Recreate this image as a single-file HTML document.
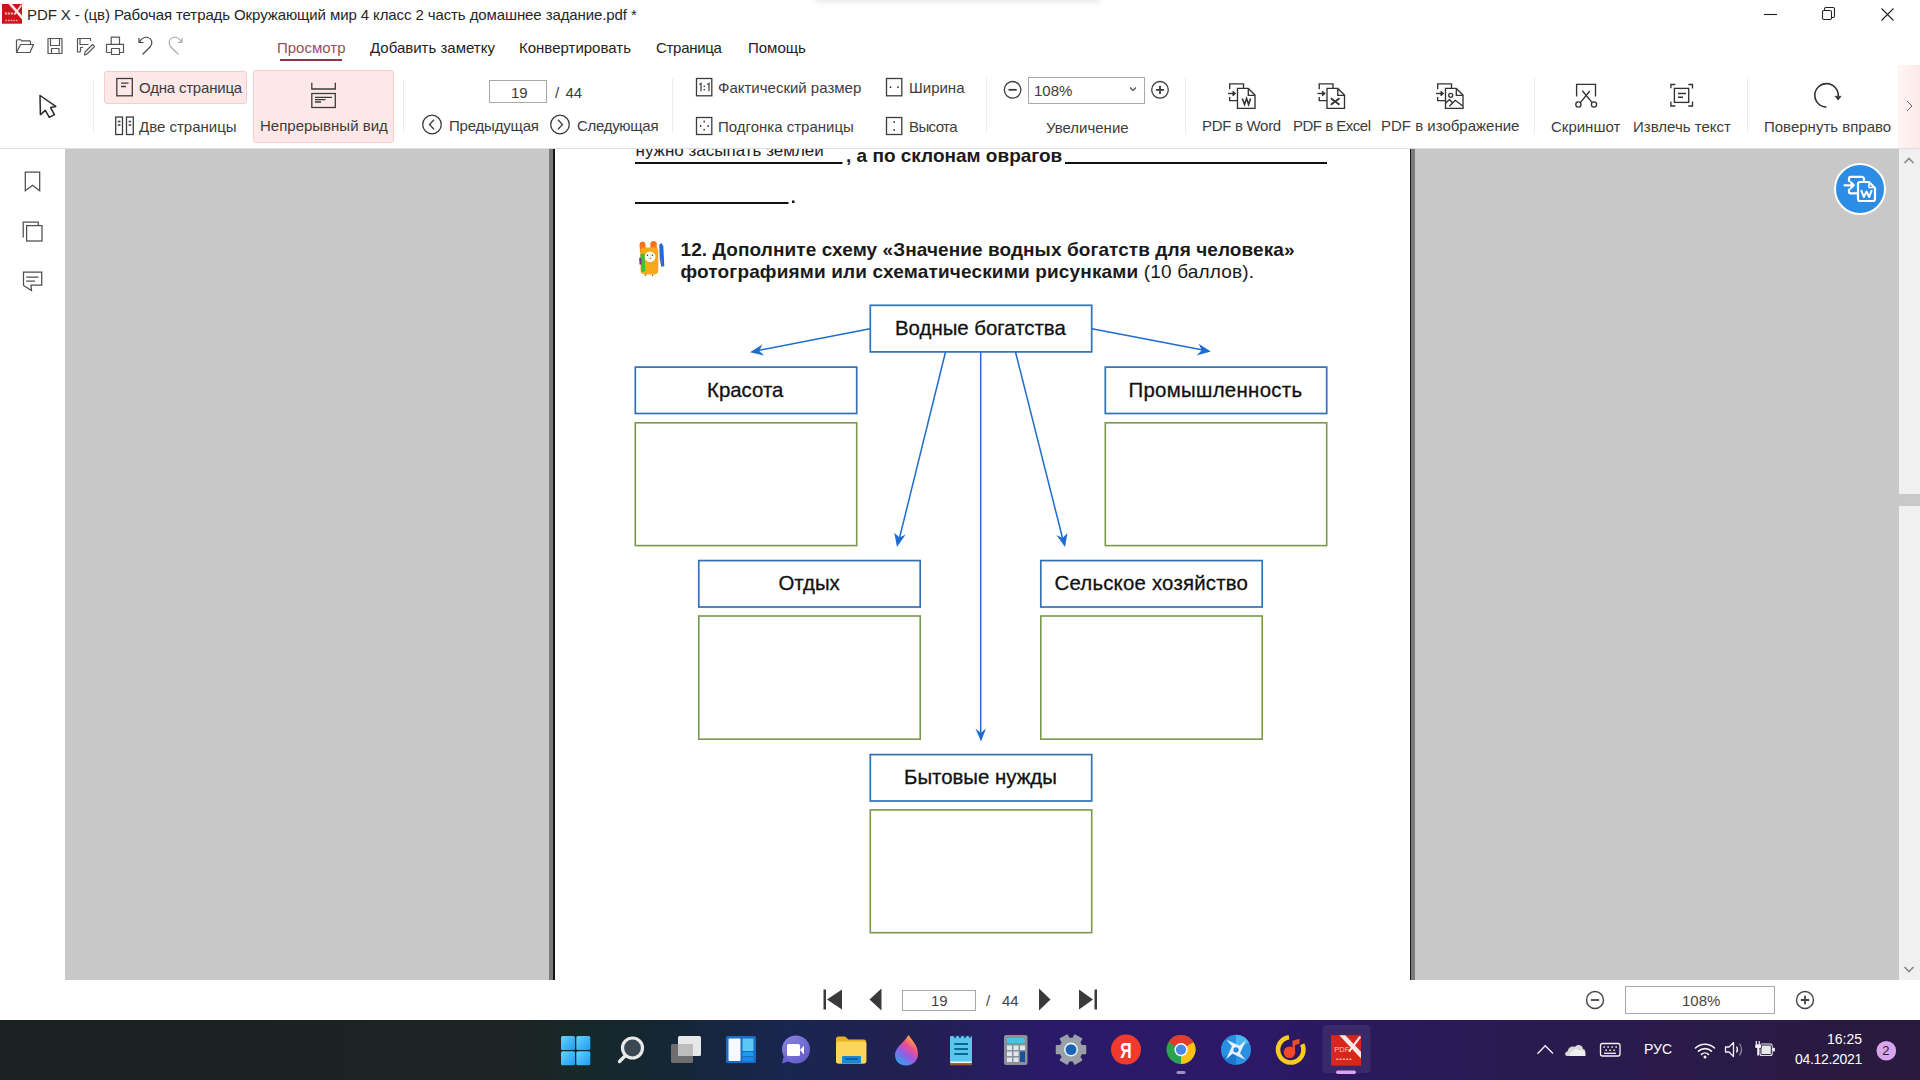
<!DOCTYPE html>
<html><head><meta charset="utf-8">
<style>
*{box-sizing:border-box}
html,body{margin:0;padding:0}
body{width:1920px;height:1080px;position:relative;overflow:hidden;background:#fff;font-family:"Liberation Sans",sans-serif;color:#333}
.a{position:absolute}
.t{position:absolute;white-space:nowrap;font-size:15px;line-height:15px;color:#3c3c3c}
svg{position:absolute;overflow:visible}
</style></head><body>

<!-- TITLE BAR -->
<div class="a" style="left:815px;top:-12px;width:285px;height:12px;box-shadow:0 2px 6px rgba(0,0,0,0.10)"></div>
<svg style="left:0;top:0" width="26" height="28">
 <rect x="2" y="4" width="20" height="19.7" fill="#c9161c"/>
 <path d="M8.5 4 H12 L22 15.5 V19.5 Z" fill="#fde8e8"/>
 <path d="M21.5 5 L14.5 14.5" stroke="#fde8e8" stroke-width="1.6"/>
 <path d="M5 13.5 H14.5" stroke="#f6b0a8" stroke-width="1.8" stroke-dasharray="2.2 0.8"/>
 <path d="M5.5 20.5 H17.5" stroke="#f2b0a0" stroke-width="1.4" stroke-dasharray="1.6 1"/>
</svg>
<div class="t" style="left:27px;top:7px;color:#262626;letter-spacing:-0.1px">PDF X - (цв) Рабочая тетрадь Окружающий мир 4 класс 2 часть домашнее задание.pdf *</div>

<!-- MENU -->
<div class="t" style="left:277px;top:40px;color:#94505c">Просмотр</div>
<div class="a" style="left:280px;top:59px;width:62px;height:2px;background:#8b3a45"></div>
<div class="t" style="left:370px;top:40px;color:#222">Добавить заметку</div>
<div class="t" style="left:519px;top:40px;color:#222">Конвертировать</div>
<div class="t" style="left:656px;top:40px;color:#222;letter-spacing:-0.3px">Страница</div>
<div class="t" style="left:748px;top:40px;color:#222">Помощь</div>


<!-- window controls -->
<svg style="left:0;top:0" width="1920" height="30">
 <g stroke="#222" stroke-width="1.1" fill="none">
  <line x1="1764" y1="14.5" x2="1777" y2="14.5"/>
  <rect x="1822.5" y="10.5" width="9" height="9" rx="1.5"/>
  <path d="M1824.5 10.5 V9 a1.5 1.5 0 0 1 1.5 -1.5 H1833 a1.5 1.5 0 0 1 1.5 1.5 V16 a1.5 1.5 0 0 1 -1.5 1.5 H1831.5"/>
  <path d="M1881.5 8.5 L1893.5 20.5 M1893.5 8.5 L1881.5 20.5"/>
 </g>
</svg>

<!-- quick access icons -->
<svg style="left:0;top:30" width="200" height="35">
 <g stroke="#555" stroke-width="1.2" fill="none" stroke-linejoin="round">
  <path d="M16.5 22.5 V10 L20.5 9.5 L21.5 10.8 H30 L30.5 12 V14.5"/>
  <path d="M16.5 22.5 L20.5 14.5 H33.5 L30 22.5 Z"/>
  <path d="M48 8.5 H62 V23.5 H48 Z"/>
  <path d="M50.5 8.5 V15.5 H59.5 V8.5"/>
  <path d="M51.5 23.5 V18.5 H59 V23.5"/>
  <path d="M77.5 22 V8.5 H90.5 V11"/>
  <path d="M80 8.5 V14.5 H88.5"/>
  <path d="M80.5 22 V17.5 H83"/>
  <path d="M77.5 22 H80"/>
  <path d="M84.5 25 L85 22 L92.5 14.5 L94.5 16.5 L87 24 Z"/>
  <path d="M111.2 14 V7.2 H119.5 V14"/>
  <path d="M106.5 22.5 V14.3 H123.5 V22.5 H119.5 M111.5 22.5 H106.5"/>
  <path d="M111.5 18.5 H119.5 V24.5 H111.5 Z"/>
  <path d="M139 8 V12.5 H143.5" stroke="#444"/>
  <path d="M139.5 12 C142 8 145.5 6.8 148 7.5 C152 8.5 153 13 150.5 16.5 L142.5 24.5" stroke="#444"/>
  <path d="M182 8 V12.5 H177.5" stroke="#aaa"/>
  <path d="M181.5 12 C179 8 175.5 6.8 173 7.5 C169 8.5 168 13 170.5 16.5 L178.5 24.5" stroke="#aaa"/>
 </g>
</svg>

<!-- RIBBON -->
<!-- cursor -->
<svg style="left:0;top:0" width="70" height="130">
 <path d="M40 95.5 L40.4 114.8 L45.3 110.4 L49.3 117.4 L54.4 114.6 L50.6 107.6 L55.8 106.4 Z" fill="#fff" stroke="#2a2a2a" stroke-width="1.5" stroke-linejoin="round"/>
</svg>
<div class="a" style="left:93px;top:80px;width:1px;height:53px;background:#ececec"></div>

<div class="a" style="left:104px;top:70.5px;width:143px;height:33px;background:#fde7e7;border:1px solid #f6cccc;border-radius:3px"></div>
<div class="a" style="left:253px;top:70px;width:141px;height:73px;background:#fde7e7;border:1px solid #f6cccc;border-radius:3px"></div>
<div class="a" style="left:403px;top:80px;width:1px;height:53px;background:#ececec"></div>
<div class="a" style="left:672px;top:78px;width:1px;height:55px;background:#ececec"></div>
<div class="a" style="left:986px;top:78px;width:1px;height:55px;background:#ececec"></div>
<div class="a" style="left:1185px;top:78px;width:1px;height:55px;background:#ececec"></div>
<div class="a" style="left:1534px;top:78px;width:1px;height:55px;background:#ececec"></div>
<div class="a" style="left:1747px;top:78px;width:1px;height:55px;background:#ececec"></div>
<div class="a" style="left:1898px;top:65px;width:22px;height:83px;background:linear-gradient(90deg,#fff5f5,#fde9e9)"></div>

<svg style="left:0;top:0" width="1920" height="150">
 <g stroke="#3c3c3c" stroke-width="1.3" fill="none">
  <!-- one page -->
  <rect x="116.8" y="78.5" width="15.5" height="17.3"/>
  <path d="M121 83.2 H128.5 M121 86.5 H126"/>
  <!-- two pages -->
  <rect x="115.7" y="117" width="6.8" height="17.5"/>
  <rect x="126.5" y="117" width="6.8" height="17.5"/>
  <path d="M117.8 121.5 H120.5 M117.8 125 H120.5 M128.6 121.5 H131.2 M128.6 125 H131.2"/>
  <!-- continuous -->
  <path d="M311.8 82.8 V89 H335.3 V82.8"/>
  <rect x="311.8" y="93.5" width="23.5" height="14"/>
  <path d="M315 97.3 H332 M315 99.6 H325.5 M315 102 H321"/>
  <!-- prev / next -->
  <circle cx="432" cy="124.5" r="9.3"/>
  <path d="M434 119.8 L429.5 124.5 L434 129.2"/>
  <circle cx="560" cy="124.5" r="9.3"/>
  <path d="M558 119.8 L562.5 124.5 L558 129.2"/>
  <!-- actual size etc -->
  <rect x="696.5" y="78.5" width="15.3" height="17.3"/>
  <rect x="886.5" y="78.5" width="15.3" height="17.3"/>
  <rect x="696.5" y="117.5" width="15.3" height="17"/>
  <rect x="886.5" y="117.5" width="15.3" height="17"/>
  <!-- zoom -->
  <circle cx="1012.6" cy="89.8" r="8.3"/>
  <path d="M1008.5 89.8 H1016.7" stroke-width="1.8"/>
  <circle cx="1160" cy="89.8" r="8.3"/>
  <path d="M1155.9 89.8 H1164.1 M1160 85.7 V93.9" stroke-width="1.8"/>
  <path d="M1130 87.5 L1133 90.5 L1136 87.5" stroke-width="1.1"/>
 </g>
 <g fill="#3c3c3c" font-family="Liberation Sans" >
  <path d="M699.3 84.5 L701 83.3 V91.2 M707.3 84.5 L709 83.3 V91.2" stroke="#3c3c3c" stroke-width="1.2" fill="none"/><rect x="703.6" y="85.6" width="1.4" height="1.4"/><rect x="703.6" y="89" width="1.4" height="1.4"/>
  <circle cx="890.5" cy="87.2" r="0.9"/><circle cx="898" cy="87.2" r="0.9"/>
  <circle cx="704.2" cy="121.5" r="0.9"/><circle cx="700.6" cy="126" r="0.9"/><circle cx="708.2" cy="126" r="0.9"/><circle cx="704.2" cy="129.8" r="0.9"/>
  <circle cx="894.2" cy="122" r="0.9"/><circle cx="894.2" cy="130" r="0.9"/>
 </g>
 <!-- pdf convert icons -->
 <g stroke="#333" stroke-width="1.35" fill="none" stroke-linejoin="miter">
  <g transform="translate(1220,78)">
   <path d="M9.7 11.2 V5.8 H23.5 V10.4 M9.7 19 V22.6 H17.5"/>
   <path d="M8 15.5 H14.5"/><path d="M12.6 13.4 L15.2 15.5 L12.6 17.6" fill="#333"/>
   <path d="M17.5 10.4 H28.3 L35 17 V30.4 H17.5 Z M28.3 10.4 V17.3 H35"/>
   <path d="M22.3 20.5 L24.5 26.5 L26.6 20.5 L28.6 26.5 L30.6 20.5" stroke-width="1.6"/>
  </g>
  <g transform="translate(1309.5,78)">
   <path d="M9.7 11.2 V5.8 H23.5 V10.4 M9.7 19 V22.6 H17.5"/>
   <path d="M8 15.5 H14.5"/><path d="M12.6 13.4 L15.2 15.5 L12.6 17.6" fill="#333"/>
   <path d="M17.5 10.4 H28.3 L35 17 V30.4 H17.5 Z M28.3 10.4 V17.3 H35"/>
   <path d="M21.3 20.3 L30 26.8 M30 20.3 L21.3 26.8" stroke-width="1.8"/>
  </g>
  <g transform="translate(1428,78)">
   <path d="M9.7 11.2 V5.8 H23.5 V10.4 M9.7 19 V22.6 H17.5"/>
   <path d="M8 15.5 H14.5"/><path d="M12.6 13.4 L15.2 15.5 L12.6 17.6" fill="#333"/>
   <path d="M17.5 10.4 H28.3 L35 17 V30.4 H17.5 Z M28.3 10.4 V17.3 H35"/>
   <circle cx="22.7" cy="17.3" r="2"/>
   <path d="M17.5 25.2 L21.5 21.5 L24.2 24.5 M21.3 28.3 L27.3 22.3 L34.8 28"/>
  </g>
  <!-- screenshot -->
  <g transform="translate(1568,78)">
   <path d="M8.6 18.5 V6.3 H27.5 V18.5"/>
   <path d="M14.3 12.8 L24.2 24.6 M21.8 13 L12.3 24.6"/>
   <circle cx="10.4" cy="26.5" r="2.6"/><circle cx="26" cy="26.5" r="2.6"/>
  </g>
  <!-- extract text -->
  <g transform="translate(1662,78)">
   <path d="M8.9 10.3 V6.5 H13.3 M26.3 6.5 H30.5 V10.5 M8.9 23.5 V28 H13.3 M26.3 28 H30.5 V23.5"/>
   <rect x="12.4" y="10.4" width="14.3" height="14"/>
   <path d="M16 15.5 H24 M16 19.2 H21"/>
  </g>
  <!-- rotate -->
  <g transform="translate(1806,76)">
   <path d="M20.5 31 A11.7 11.7 0 1 1 32.2 20" stroke-width="1.6"/>
   <path d="M29.2 20.3 H35 L32.1 24 Z" fill="#333" stroke-width="0.8"/>
  </g>
  <path d="M1907 101 L1912 106 L1907 111" stroke="#666" stroke-width="1"/>
 </g>
</svg>

<!-- ribbon texts -->
<div class="t" style="left:139px;top:80.3px;letter-spacing:-0.2px">Одна страница</div>
<div class="t" style="left:139px;top:118.8px">Две страницы</div>
<div class="t" style="left:260px;top:118.3px">Непрерывный вид</div>
<div class="a" style="left:489px;top:80px;width:58px;height:23px;border:1px solid #a8a8a8;background:#fff"></div>
<div class="t" style="left:511px;top:85.3px">19</div>
<div class="t" style="left:555px;top:85.3px">/</div><div class="t" style="left:565.5px;top:85.3px">44</div>
<div class="t" style="left:449px;top:118.3px;letter-spacing:-0.2px">Предыдущая</div>
<div class="t" style="left:577px;top:118.3px;letter-spacing:-0.3px">Следующая</div>
<div class="t" style="left:718px;top:79.8px">Фактический размер</div>
<div class="t" style="left:909px;top:79.8px">Ширина</div>
<div class="t" style="left:718px;top:119px">Подгонка страницы</div>
<div class="t" style="left:909px;top:119px;letter-spacing:-0.6px">Высота</div>
<div class="a" style="left:1028px;top:77px;width:117px;height:27px;border:1px solid #a8a8a8;background:#fff"></div>
<div class="t" style="left:1034px;top:82.8px">108%</div>
<svg style="left:1125px;top:82px" width="15" height="15"><path d="M5 5.5 L8 8.5 L11 5.5" stroke="#444" stroke-width="1.1" fill="none"/></svg>
<div class="t" style="left:1046px;top:120.3px">Увеличение</div>
<div class="t" style="left:1202px;top:118px;letter-spacing:-0.3px">PDF в Word</div>
<div class="t" style="left:1293px;top:118px;letter-spacing:-0.5px">PDF в Excel</div>
<div class="t" style="left:1381px;top:118px">PDF в изображение</div>
<div class="t" style="left:1551px;top:118.7px">Скриншот</div>
<div class="t" style="left:1633px;top:118.7px">Извлечь текст</div>
<div class="t" style="left:1764px;top:118.7px">Повернуть вправо</div>

<!-- header separator -->
<div class="a" style="left:0;top:148px;width:1920px;height:1px;background:#dedede"></div>

<!-- VIEWER -->
<div class="a" style="left:65px;top:149px;width:1834px;height:831px;background:#c8c8c8"></div>
<div class="a" style="left:549px;top:149px;width:866px;height:831px;background:#7b7b7b"></div>
<div class="a" style="left:553px;top:149px;width:858px;height:831px;background:#161616"></div>
<div class="a" style="left:554.5px;top:149px;width:855px;height:831px;background:#fff"></div>


<!-- scrollbar -->
<div class="a" style="left:1899px;top:149px;width:21px;height:831px;background:#f0f0f0"></div>
<div class="a" style="left:1899px;top:494px;width:21px;height:12px;background:#c9c9c9"></div>

<!-- PAGE CONTENT -->
<div class="a" style="left:554.5px;top:149px;width:855px;height:831px;overflow:hidden">
 <div style="position:absolute;left:-554.5px;top:-149px;width:1920px;height:1080px">
  <div class="t" style="left:635.5px;top:141.6px;font-size:17px;line-height:17px;color:#222">нужно засыпать землей</div>
  <div class="t" style="left:846px;top:145.7px;font-size:19px;line-height:19px;font-weight:700;color:#1a1a1a">, а по склонам оврагов</div>
  <div class="t" style="left:680.5px;top:239.7px;font-size:19px;line-height:19px;font-weight:700;color:#1a1a1a;letter-spacing:0.08px">12. Дополните схему «Значение водных богатств для человека»</div>
  <div class="t" style="left:680.5px;top:262.3px;font-size:19px;line-height:19px;color:#1a1a1a;letter-spacing:0.16px"><b>фотографиями или схематическими рисунками</b> (10 баллов).</div>
 </div>
</div>
<svg style="left:0;top:0" width="1920" height="1080">
 <defs><clipPath id="pc"><rect x="554.5" y="149" width="855" height="831"/></clipPath></defs>
 <g clip-path="url(#pc)">
  <path d="M635 163 H842.5 M1065 163 H1327 M635 203 H788.5" stroke="#111" stroke-width="2"/>
  <rect x="792" y="200.5" width="2.5" height="2.5" fill="#111"/>
  <!-- mascot -->
  <g>
   <path d="M639.5 244 Q640 241.5 642.5 241.5 Q645.5 241.8 645.5 245 L646 252 L640 253 Z" fill="#f3741e"/>
   <path d="M650.3 244 Q650.5 241 653.5 241 Q656.8 241.2 656.8 244 V251 H650.5 Z" fill="#f3741e"/>
   <path d="M640.5 250 Q641 247.5 644 247.5 H655.5 Q658.3 247.5 658.3 250.5 V270 Q658.3 274.5 653.5 274.5 H645 Q640.5 274.5 640.5 270 Z" fill="#f8a91a"/>
   <circle cx="650.1" cy="256.8" r="5.4" fill="#fdfcf2"/>
   <circle cx="647.4" cy="255.3" r="0.75" fill="#333"/><circle cx="652.4" cy="255.3" r="0.75" fill="#333"/>
   <circle cx="650.3" cy="258.4" r="0.7" fill="#c04060"/>
   <path d="M640.2 254 L644.5 253.5 L645.3 271.5 L641.5 272 Z" fill="#3cc038"/>
   <path d="M639.2 258 L641.2 257.8 L641.5 264.5 L639.5 264.5 Z" fill="#7a2aa0"/>
   <path d="M659.3 244.5 L661.3 243 L663.3 246 L664.3 266 L661.5 267 L659.8 260 Z" fill="#1e6ad6"/>
   <path d="M659.8 260 L662.2 259.5 L661.5 263 Z" fill="#b07040"/>
   <circle cx="645.5" cy="275.3" r="0.8" fill="#555"/><circle cx="652.6" cy="275.3" r="0.8" fill="#555"/>
  </g>
  <!-- diagram boxes -->
  <g fill="none" stroke="#3270b8" stroke-width="1.7">
   <rect x="870.3" y="305.3" width="221.4" height="46.6"/>
   <rect x="635.3" y="367.1" width="221.4" height="46.4"/>
   <rect x="1105.3" y="367.1" width="221.4" height="46.4"/>
   <rect x="698.8" y="560.6" width="221.4" height="46.4"/>
   <rect x="1040.8" y="560.6" width="221.4" height="46.4"/>
   <rect x="870.3" y="754.6" width="221.4" height="46.4"/>
  </g>
  <g fill="none" stroke="#78984a" stroke-width="1.6">
   <rect x="635.3" y="422.8" width="221.4" height="122.8"/>
   <rect x="1105.3" y="422.8" width="221.4" height="122.8"/>
   <rect x="698.8" y="616" width="221.4" height="123.2"/>
   <rect x="1040.8" y="616" width="221.4" height="123.2"/>
   <rect x="870.3" y="809.9" width="221.4" height="122.8"/>
  </g>
  <!-- arrows -->
  <g stroke="#1f6cd0" stroke-width="1.5" fill="none">
   <path d="M870 328.8 L758 350.5"/>
   <path d="M1092 328.8 L1203 350"/>
   <path d="M945.5 352 L899.5 538"/>
   <path d="M1015.5 352 L1062.5 538"/>
   <path d="M980.7 352 V733"/>
  </g>
  <g fill="#1f6cd0">
   <path d="M750 352.3 L762.4 344.6 L759.2 351 L764.3 355.6 Z"/>
   <path d="M1210.8 351.5 L1196.6 355.4 L1201.7 350.3 L1198.7 343.8 Z"/>
   <path d="M897 547 L894.3 532.8 L899.5 537.5 L905.7 534.5 Z"/>
   <path d="M1065 547 L1056.4 535 L1062.5 538 L1067.5 533 Z"/>
   <path d="M981 741.5 L975.5 728.5 L980.8 733 L986 728.5 Z"/>
  </g>
 </g>
</svg>
<div class="t" style="left:895px;top:317.7px;font-size:20.4px;line-height:20.4px;color:#111;-webkit-text-stroke:0.3px #111">Водные богатства</div>
<div class="t" style="left:707px;top:379.8px;font-size:20.4px;line-height:20.4px;color:#111;-webkit-text-stroke:0.3px #111">Красота</div>
<div class="t" style="left:1128.5px;top:379.8px;letter-spacing:0.3px;font-size:20.4px;line-height:20.4px;color:#111;-webkit-text-stroke:0.3px #111">Промышленность</div>
<div class="t" style="left:778.5px;top:572.5px;font-size:20.4px;line-height:20.4px;color:#111;-webkit-text-stroke:0.3px #111">Отдых</div>
<div class="t" style="left:1054.5px;top:572.5px;letter-spacing:0.2px;font-size:20.4px;line-height:20.4px;color:#111;-webkit-text-stroke:0.3px #111">Сельское хозяйство</div>
<div class="t" style="left:904px;top:766.9px;font-size:20.4px;line-height:20.4px;color:#111;-webkit-text-stroke:0.3px #111">Бытовые нужды</div>

<!-- float convert button -->
<div class="a" style="left:1833.5px;top:162.7px;width:52px;height:52px;border-radius:50%;background:#2b8de6;border:2px solid #fff"></div>
<svg style="left:0;top:0" width="1920" height="260">
 <g stroke="#fff" stroke-width="2.2" fill="none" stroke-linejoin="round" stroke-linecap="round">
   <path d="M1849 181 V178.5 Q1849 176.8 1850.8 176.8 H1862 Q1863.6 176.8 1864 178.5 V181"/>
   <path d="M1849 189.5 V191.5 Q1849 193.3 1850.8 193.3 H1857.5"/>
   <path d="M1844.5 185.3 H1853.5 M1850.8 182.3 L1853.8 185.3 L1850.8 188.3"/>
   <path d="M1860 182 H1869 L1875 188 V199 Q1875 201 1873 201 H1860 Q1858 201 1858 199 V184 Q1858 182 1860 182 Z"/>
   <path d="M1869 182.5 V187.5 H1874.5" stroke-width="1.6"/>
   <path d="M1861.5 190.8 L1863.8 197 L1866.5 191.5 L1869.2 197 L1871.5 190.8" stroke-width="2"/>
 </g>
</svg>

<!-- scrollbar arrows -->
<svg style="left:1899px;top:149px" width="21" height="831">
 <path d="M5.5 14 L10 9.5 L14.5 14" stroke="#888" stroke-width="1.6" fill="none"/>
 <path d="M5.5 818 L10 822.5 L14.5 818" stroke="#888" stroke-width="1.6" fill="none"/>
</svg>

<!-- SIDEBAR icons -->
<svg style="left:0;top:149px" width="65" height="200">
 <g stroke="#4d4d4d" stroke-width="1.25" fill="none">
  <path d="M25.3 23 V41.8 L32.5 36.3 L39.7 41.8 V23 Z"/>
  <path d="M23.2 88.5 V73 H38.3 V76"/>
  <rect x="26.6" y="76.6" width="15.4" height="15.4"/>
  <path d="M23.5 123 H41.7 V136 H31 L31.5 141.5 L23.5 136.5 Z"/>
  <path d="M26.2 128.2 H38.5 M26.2 132.1 H35"/>
 </g>
</svg>

<!-- BOTTOM BAR -->
<svg style="left:0;top:980px" width="1920" height="40">
 <g fill="#3a3a3a">
  <rect x="823.5" y="9.5" width="2.5" height="20"/>
  <path d="M827 19.5 L842 9.5 V29.5 Z"/>
  <path d="M869.5 19.5 L881.5 8.5 V30.5 Z"/>
  <path d="M1050.5 19.5 L1039 8.5 V30.5 Z"/>
  <path d="M1093 19.5 L1079 9.5 V29.5 Z"/>
  <rect x="1094.5" y="9.5" width="2.5" height="20"/>
 </g>
 <g stroke="#444" stroke-width="1.4" fill="none">
  <circle cx="1595" cy="20" r="8.5"/><path d="M1590.8 20 H1599.2" stroke-width="1.8"/>
  <circle cx="1805" cy="20" r="8.5"/><path d="M1800.8 20 H1809.2 M1805 15.8 V24.2" stroke-width="1.8"/>
 </g>
</svg>
<div class="a" style="left:901.5px;top:989.5px;width:74px;height:21px;border:1px solid #a8a8a8;background:#fff"></div>
<div class="t" style="left:931px;top:992.6px;color:#444">19</div>
<div class="t" style="left:986px;top:992.6px;color:#444">/</div>
<div class="t" style="left:1002px;top:992.6px;color:#444">44</div>
<div class="a" style="left:1625px;top:986px;width:150px;height:27.5px;border:1px solid #a8a8a8;background:#fff"></div>
<div class="t" style="left:1682px;top:993px;color:#444">108%</div>


<!-- TASKBAR -->
<div class="a" style="left:0;top:1020px;width:1920px;height:60px;background:linear-gradient(90deg,#1b2322 0%,#1b2423 27%,#172829 30%,#152636 35%,#182650 41%,#222050 47%,#2a1a6a 55%,#2c1866 65%,#2b1a52 78%,#291a3e 100%)"></div>


<svg style="left:0;top:1020px" width="1920" height="60">
 <defs>
  <linearGradient id="win" x1="0" y1="0" x2="1" y2="1"><stop offset="0" stop-color="#6ad2fa"/><stop offset="1" stop-color="#1b9cf2"/></linearGradient>
  <linearGradient id="drop" x1="0.8" y1="0" x2="0.2" y2="1"><stop offset="0" stop-color="#ffd32a"/><stop offset="0.35" stop-color="#f0508a"/><stop offset="0.6" stop-color="#9a5ae0"/><stop offset="1" stop-color="#2aa8f0"/></linearGradient>
  <linearGradient id="teams" x1="0" y1="0" x2="1" y2="1"><stop offset="0" stop-color="#8a84e0"/><stop offset="1" stop-color="#5f57c8"/></linearGradient>
 </defs>
 <!-- windows -->
 <g fill="url(#win)">
  <rect x="561" y="16" width="14" height="14" rx="1.5"/><rect x="576.3" y="16" width="14" height="14" rx="1.5"/>
  <rect x="561" y="31.2" width="14" height="14" rx="1.5"/><rect x="576.3" y="31.2" width="14" height="14" rx="1.5"/>
 </g>
 <!-- search -->
 <circle cx="632.5" cy="28" r="10" fill="#3b4852" stroke="#e8e8e8" stroke-width="3.2"/>
 <path d="M625.5 35.5 L619.5 41.5" stroke="#e8e8e8" stroke-width="3.4" stroke-linecap="round"/>
 <!-- task view -->
 <rect x="671" y="24" width="22" height="19" rx="1.5" fill="#6e6e6e"/>
 <rect x="678" y="16" width="23" height="20" rx="1.5" fill="#f2f2f2" opacity="0.95"/>
 <rect x="678" y="24" width="15" height="12" fill="#bdbdbd"/>
 <!-- widgets -->
 <rect x="726" y="16" width="30" height="27" rx="1.5" fill="#1b6cc4"/>
 <rect x="728.5" y="18.5" width="12" height="22.5" rx="1" fill="#f5f8fc"/>
 <rect x="742.5" y="18.5" width="11" height="12.5" fill="#5cc6f4"/>
 <rect x="742.5" y="32" width="11" height="4" fill="#1a9af0"/>
 <rect x="742.5" y="37" width="11" height="4" fill="#1a8ae6"/>
 <!-- teams -->
 <circle cx="796" cy="29.5" r="14" fill="url(#teams)"/>
 <path d="M782 43.5 L784 35 L790 41 Z" fill="#6a62d0"/>
 <rect x="787" y="24" width="13" height="12" rx="1.5" fill="#fff"/>
 <path d="M800 30 L804 25.5 V34.5 Z" fill="#fff"/>
 <!-- folder -->
 <path d="M836 19 Q836 16.5 838.5 16.5 H845 L848.5 19.5 H864 Q866.3 19.5 866.3 22 V41 Q866.3 43.4 864 43.4 H838.5 Q836 43.4 836 41 Z" fill="#e9b320"/>
 <rect x="836" y="21.5" width="30.3" height="21.9" rx="2" fill="#fcd55a"/>
 <rect x="842" y="36" width="19" height="7.4" rx="1" fill="#1e88d8"/>
 <rect x="845" y="38" width="13" height="2" fill="#0e5ea8"/>
 <!-- paint drop -->
 <path d="M908.5 15 C911 19 918 25 918 34 C918 41 912.5 45.5 906 45.5 C899.5 45.5 895 41 895 35 C895 27 904 23 908.5 15 Z" fill="url(#drop)"/>
 <!-- notepad -->
 <rect x="950" y="16" width="22" height="27.5" rx="1" fill="#5ac6ee"/>
 <path d="M950 15 L952.5 15 L955 18.5 L957.5 15 L960 18.5 L962.5 15 L965 18.5 L967.5 15 L970 18.5 L972 15 Z" fill="#1e3a6a"/>
 <rect x="950.5" y="41.5" width="21" height="1.8" fill="#e8f4f8"/>
 <rect x="950" y="43.3" width="22" height="2" fill="#a0552d"/>
 <path d="M954.3 24 H968 M954.3 29 H968 M954.3 34 H968" stroke="#0b6890" stroke-width="1.8"/>
 <!-- calculator -->
 <rect x="1004" y="15" width="23.5" height="30" rx="2" fill="#8b9099"/>
 <rect x="1007" y="18" width="17.5" height="5" fill="#48c2ec"/>
 <g fill="#e2e6ec">
  <rect x="1007" y="25.5" width="5" height="4.5"/><rect x="1013.5" y="25.5" width="5" height="4.5"/><rect x="1020" y="25.5" width="5" height="4.5"/>
  <rect x="1007" y="31.5" width="5" height="4.5"/><rect x="1013.5" y="31.5" width="5" height="4.5"/>
  <rect x="1007" y="37.5" width="5" height="4.5"/><rect x="1013.5" y="37.5" width="5" height="4.5"/>
 </g>
 <rect x="1020" y="31.5" width="5" height="10.5" fill="#1a4f9a"/>
 <!-- settings -->
 <g transform="translate(1071,29.6)">
  <path d="M10.52 -3.83 L14.49 -3.88 L14.49 3.88 L10.52 3.83 L8.58 7.20 L10.61 10.61 L3.88 14.49 L1.94 11.03 L-1.94 11.03 L-3.88 14.49 L-10.61 10.61 L-8.58 7.20 L-10.52 3.83 L-14.49 3.88 L-14.49 -3.88 L-10.52 -3.83 L-8.58 -7.20 L-10.61 -10.61 L-3.88 -14.49 L-1.94 -11.03 L1.94 -11.03 L3.88 -14.49 L10.61 -10.61 L8.58 -7.20 Z" fill="#9aa0a8" stroke="#9aa0a8" stroke-width="1.5" stroke-linejoin="round"/>
  <circle r="7" fill="#e8f0f8"/><circle r="5.4" fill="#1c62b4"/>
 </g>
 <!-- yandex -->
 <circle cx="1126" cy="29.6" r="15" fill="#f23a2c"/>
 <text x="1126" y="38.5" text-anchor="middle" font-family="Liberation Sans" font-weight="700" font-size="22" fill="#fff" transform="translate(1126 0) scale(0.72 1) translate(-1126 0)">Я</text>
 <!-- chrome -->
 <g transform="translate(1181,29.6)">
  <circle r="14.5" fill="#2ba24c"/>
  <path d="M0 0 L12.56 -7.25 A14.5 14.5 0 0 0 -12.56 -7.25 Z" fill="#e33b2e"/>
  <path d="M0 0 L12.56 -7.25 A14.5 14.5 0 0 1 0 14.5 Z" fill="#fbc116"/>
  <circle r="6.6" fill="#fff"/><circle r="5.2" fill="#4a88e8"/>
 </g>
 <rect x="1176.5" y="51" width="9" height="3" rx="1.5" fill="#9e8fc4"/>
 <!-- blue compass -->
 <g transform="translate(1236,29.8)">
  <circle r="15" fill="#2a90e2"/>
  <path d="M0 -15 A15 15 0 0 1 13 -7.5 L0 0 Z" fill="#48b8f0"/>
  <path d="M0 15 A15 15 0 0 1 -13 7.5 L0 0 Z" fill="#1a78d0"/>
  <path d="M-9.5 -10 L3.5 -4 L10 -9.5 L4 3.5 L9.5 10 L-3.5 4 L-10 9.5 L-4 -3.5 Z" fill="#e6f1fa"/>
  <circle r="2.6" fill="#2a86d8"/>
 </g>
 <!-- yandex music -->
 <g transform="translate(1291,29.8)">
  <path d="M-2 -12.6 A12.7 12.7 0 1 0 11.2 -5.5" fill="none" stroke="#f7cc1a" stroke-width="4.6"/>
  <circle cx="-1.5" cy="2.5" r="5.8" fill="#f04a28"/>
  <path d="M1.5 2 V-9 L8.5 -11 V-6 L4 -4.8 V2 Z" fill="#f04a28"/>
 </g>
 <!-- active pdf tile -->
 <rect x="1322.5" y="5" width="48" height="48" rx="4" fill="#ffffff" fill-opacity="0.07"/>
 <g transform="translate(1328,9.2) scale(1.5)">
 <rect x="2" y="4" width="20" height="20.3" fill="#d8261a"/>
 <path d="M7.5 4 H11.5 L22 15 V19.5 Z" fill="#fdeaea"/>
 <path d="M21.5 5 L14 15" stroke="#fdeaea" stroke-width="1.5"/>
 <text x="4.2" y="15" font-family="Liberation Sans" font-size="5" fill="#f7c2b8">PDF</text>
 <path d="M5.5 20 H16" stroke="#f2b8a8" stroke-width="1" stroke-dasharray="1.4 0.8"/>
</g>
 <rect x="1336" y="50.5" width="20" height="3.5" rx="1.75" fill="#d8a6f0"/>
 <!-- tray -->
 <g stroke="#f4f4f4" stroke-width="1.3" fill="none">
  <path d="M1537.5 33.8 L1545.2 25.8 L1553 33.5"/>
  <rect x="1600.5" y="23.5" width="19.5" height="12.5" rx="2"/>
  <path d="M1604 33.3 H1616"/>
 </g>
 <g fill="#f4f4f4">
  <rect x="1603.4" y="26.3" width="1.5" height="1.5"/><rect x="1607.4" y="26.3" width="1.5" height="1.5"/><rect x="1611.4" y="26.3" width="1.5" height="1.5"/><rect x="1615.4" y="26.3" width="1.5" height="1.5"/><rect x="1605.4" y="29.5" width="1.5" height="1.5"/><rect x="1609.4" y="29.5" width="1.5" height="1.5"/><rect x="1613.4" y="29.5" width="1.5" height="1.5"/>
 </g>
 <!-- cloud -->
 <path d="M1567 36 C1564.5 36 1564.5 31.5 1567.5 31.5 C1568 27.5 1572 25.5 1575 27 C1577 24 1582.5 24.5 1583 29 C1586 29 1586.5 36 1583 36 Z" fill="#d8d8d8"/>
 <path d="M1571 36 C1569 36 1569 32 1572 32 C1573 29 1577 28.5 1579 30.5 C1582 29.5 1586 31 1585.5 36 Z" fill="#f0f0f0"/>
 <!-- wifi -->
 <g stroke="#f4f4f4" stroke-width="1.6" fill="none" stroke-linecap="round">
  <path d="M1695.5 28 A14 14 0 0 1 1714.5 28"/>
  <path d="M1698.5 31.2 A9.5 9.5 0 0 1 1711.5 31.2"/>
  <path d="M1701.5 34.4 A5 5 0 0 1 1708.5 34.4"/>
 </g>
 <circle cx="1705" cy="37" r="1.5" fill="#f4f4f4"/>
 <!-- volume -->
 <path d="M1725.5 27 H1729 L1733.5 22.5 V36.5 L1729 32 H1725.5 Z" fill="none" stroke="#f4f4f4" stroke-width="1.3" stroke-linejoin="round"/>
 <path d="M1736.5 26.5 Q1738.5 29.5 1736.5 32.5" stroke="#f4f4f4" stroke-width="1.3" fill="none"/>
 <path d="M1739.5 23.5 Q1743.5 29.5 1739.5 35.5" stroke="#8a80a0" stroke-width="1.3" fill="none"/>
 <!-- battery -->
 <rect x="1759.5" y="23.5" width="13.2" height="12.6" rx="2.2" fill="#f4f0fa"/>
 <rect x="1760.9" y="25" width="10.4" height="9.6" rx="1" fill="#e8e8ec" stroke="#1e1630" stroke-width="1"/>
 <rect x="1772.3" y="27.8" width="2.6" height="3.8" rx="0.8" fill="#f4f0fa"/>
 <rect x="1754.5" y="24" width="7" height="4.5" rx="1" fill="#1e1630"/>
 <path d="M1756.3 21 V24.5 M1759.2 21 V24.5" stroke="#f4f0fa" stroke-width="1.2"/>
 <rect x="1755.2" y="24.3" width="5.8" height="3.8" rx="0.8" fill="#f4f0fa"/>
 <rect x="1757.2" y="27.5" width="1.9" height="8" fill="#f4f0fa"/>
 <!-- badge -->
 <circle cx="1886.3" cy="30.8" r="9.8" fill="#d9a5ea"/>
</svg>
<div class="t" style="left:1644px;top:1042.2px;font-size:14px;line-height:14px;color:#fff">РУС</div>
<div class="t" style="left:1827px;top:1032.3px;font-size:14px;line-height:14px;color:#fff">16:25</div>
<div class="t" style="left:1795px;top:1052px;font-size:14px;line-height:14px;color:#fff;letter-spacing:-0.3px">04.12.2021</div>
<div class="t" style="left:1882.3px;top:1044px;font-size:13px;line-height:13px;color:#222">2</div>

</body></html>
